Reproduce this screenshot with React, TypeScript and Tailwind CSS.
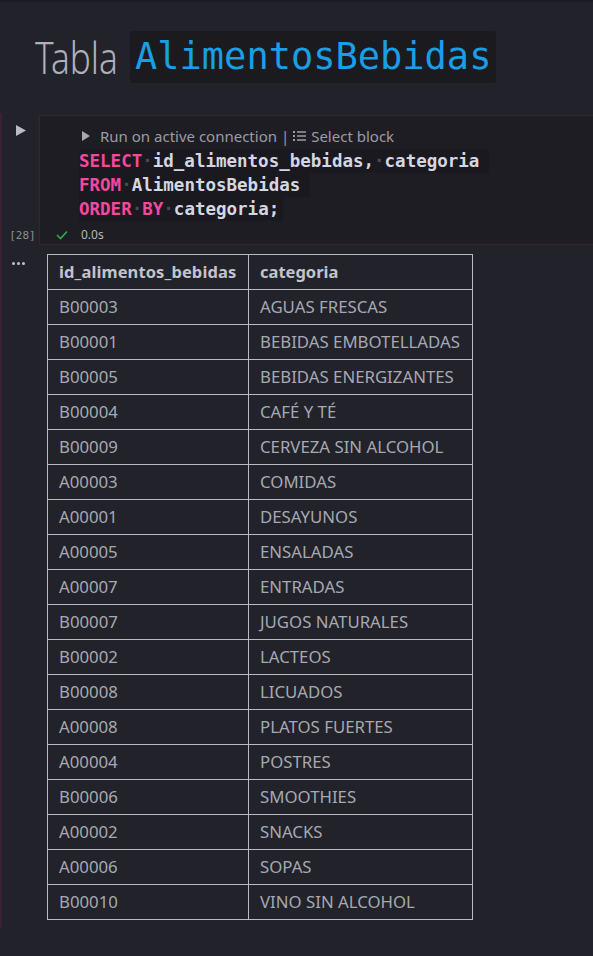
import React from "react";

const rows: [string, string][] = [
  ["B00003", "AGUAS FRESCAS"],
  ["B00001", "BEBIDAS EMBOTELLADAS"],
  ["B00005", "BEBIDAS ENERGIZANTES"],
  ["B00004", "CAFÉ Y TÉ"],
  ["B00009", "CERVEZA SIN ALCOHOL"],
  ["A00003", "COMIDAS"],
  ["A00001", "DESAYUNOS"],
  ["A00005", "ENSALADAS"],
  ["A00007", "ENTRADAS"],
  ["B00007", "JUGOS NATURALES"],
  ["B00002", "LACTEOS"],
  ["B00008", "LICUADOS"],
  ["A00008", "PLATOS FUERTES"],
  ["A00004", "POSTRES"],
  ["B00006", "SMOOTHIES"],
  ["A00002", "SNACKS"],
  ["A00006", "SOPAS"],
  ["B00010", "VINO SIN ALCOHOL"],
];

const Dot = () => <span className="text-[#4b4b57]">·</span>;
const K = ({ children }: { children: React.ReactNode }) => (
  <span className="text-[#f5489d]">{children}</span>
);

export default function App() {
  const sans = { fontFamily: '"Noto Sans", "Open Sans", sans-serif' };
  const mono = { fontFamily: '"DejaVu Sans Mono", "Liberation Mono", monospace' };
  return (
    <div
      className="w-[593px] h-[956px] bg-[#22222a] border-t-2 border-[#1b1b21] overflow-hidden"
      style={sans}
    >
      {/* Title */}
      <div className="flex pl-[35px] pt-[29px] h-[103px] items-start">
        <div className="w-[83px] h-[52px] overflow-visible">
          <span className="inline-block origin-left scale-x-[0.8] text-[44px] leading-[52px] font-light text-[#aeb1ba] whitespace-nowrap">
            Tabla
          </span>
        </div>
        <span
          className="ml-[12px] h-[52px] px-[5px] rounded-[3px] bg-[#1a1a1f] text-[#1a9ee6] text-[37px] leading-[52px]"
          style={mono}
        >
          AlimentosBebidas
        </span>
      </div>

      {/* Cell */}
      <div className="border-l-2 border-[#3a2130] mt-[8px] flex flex-col h-[815px]">
        <div className="flex pt-[2px]">
          <div className="w-[37px] h-[130px] flex flex-col justify-between items-center">
            <svg width="10" height="11" viewBox="0 0 10 11" className="mt-[10px] ml-[1px]">
              <path d="M0 0 L10 5.5 L0 11 Z" fill="#b9bcc6" />
            </svg>
            <span className="text-[11px] text-[#8a8d96] mb-[1px] ml-[4px]" style={mono}>
              [28]
            </span>
          </div>
          <div className="flex-1 h-[130px] border border-r-0 border-[#37262f] bg-[#1e1d24] flex flex-col">
            <div className="flex items-center h-[26px] mt-[7px] pl-[42px] text-[15px] text-[#9a9ca5]">
              <svg width="8" height="10" viewBox="0 0 8 10" className="mr-[10px]">
                <path d="M0 0 L8 5 L0 10 Z" fill="#a7a9b1" />
              </svg>
              <span>Run on active connection | </span>
              <svg width="14" height="12" viewBox="0 0 14 12" className="mx-[4px]">
                <rect x="0" y="1" width="2" height="2" fill="#9a9ca5" />
                <rect x="0" y="5" width="2" height="2" fill="#9a9ca5" />
                <rect x="0" y="9" width="2" height="2" fill="#9a9ca5" />
                <rect x="4" y="1.25" width="9" height="1.5" fill="#9a9ca5" />
                <rect x="4" y="5.25" width="9" height="1.5" fill="#9a9ca5" />
                <rect x="4" y="9.25" width="9" height="1.5" fill="#9a9ca5" />
              </svg>
              <span>Select block</span>
            </div>
            <div
              className="pl-[39px] text-[17.5px] leading-[24px] font-bold text-[#d3d7e2] flex flex-col items-start"
              style={mono}
            >
              <span className="bg-[#1a1920] pr-[10px] whitespace-pre">
                <K>SELECT</K>
                <Dot />
                id_alimentos_bebidas,
                <Dot />
                categoria
              </span>
              <span className="bg-[#1a1920] pr-[10px] whitespace-pre">
                <K>FROM</K>
                <Dot />
                AlimentosBebidas
              </span>
              <span className="bg-[#1a1920] pr-[4px] whitespace-pre">
                <K>ORDER</K>
                <Dot />
                <K>BY</K>
                <Dot />
                categoria;
              </span>
            </div>
            <div className="flex items-center mt-[6px] pl-[16px] h-[16px]">
              <svg width="12" height="10" viewBox="0 0 12 10">
                <path d="M1 5 L4.5 8.5 L11 1.5" stroke="#34a853" strokeWidth="1.6" fill="none" />
              </svg>
              <span className="ml-[13px] text-[12px] text-[#b5b8c0]">0.0s</span>
            </div>
          </div>
        </div>

        <div className="flex pt-[9px]">
          <div className="w-[45px] flex justify-start pl-[10px] pt-[8px]">
            <div className="flex gap-[2px] h-[3px]">
              <span className="w-[3px] h-[3px] rounded-full bg-[#c0c3cc]" />
              <span className="w-[3px] h-[3px] rounded-full bg-[#c0c3cc]" />
              <span className="w-[3px] h-[3px] rounded-full bg-[#c0c3cc]" />
            </div>
          </div>
          <table className="table-fixed w-[425px] border-collapse text-[16.8px] text-[#a6a9b2]">
            <thead>
              <tr className="h-[35px]">
                <th className="w-[201px] border border-[#b7bbc6] text-left font-bold text-[#c1c4cc] px-[11px] py-0 text-[16.5px] tracking-[0.1px]">
                  id_alimentos_bebidas
                </th>
                <th className="w-[224px] border border-[#b7bbc6] text-left font-bold text-[#c1c4cc] px-[11px] py-0 text-[16.5px]">
                  categoria
                </th>
              </tr>
            </thead>
            <tbody>
              {rows.map(([id, cat]) => (
                <tr key={id} className="h-[35px]">
                  <td className="border border-[#b7bbc6] px-[11px] py-0">{id}</td>
                  <td className="border border-[#b7bbc6] px-[11px] py-0 whitespace-nowrap overflow-hidden">{cat}</td>
                </tr>
              ))}
            </tbody>
          </table>
        </div>
      </div>
    </div>
  );
}
